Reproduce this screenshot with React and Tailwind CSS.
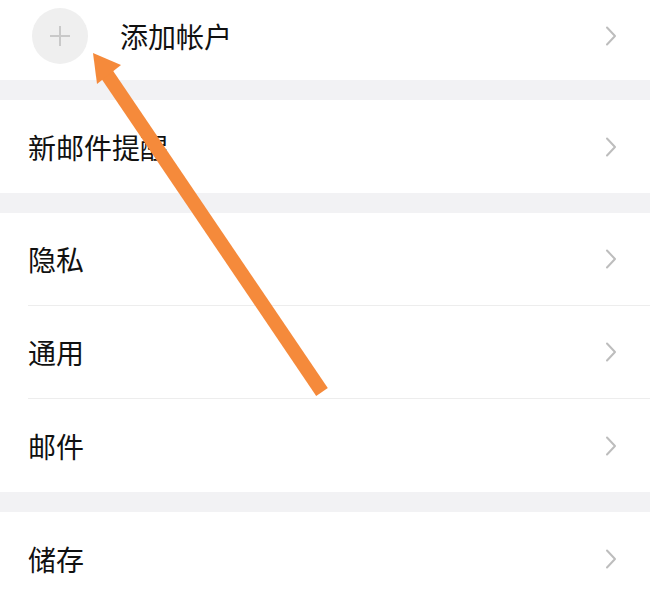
import React from "react";

const font = { fontFamily: '"Noto Sans CJK SC", "Noto Sans", sans-serif' };

function Chevron() {
  return (
    <svg width="14" height="22" viewBox="0 0 14 22" className="shrink-0">
      <path d="M3 2.5 L11 11 L3 19.5" fill="none" stroke="#bdbdbd" strokeWidth="2" strokeLinecap="round" strokeLinejoin="round" />
    </svg>
  );
}

function Row({ label, sep }) {
  return (
    <div className="pl-[28px]">
      <div className={`flex items-center justify-between h-[93px] pr-[32px] ${sep ? "border-b border-[#ededed]" : ""}`}>
        <span className="text-[28px] text-[#111] leading-none">{label}</span>
        <Chevron />
      </div>
    </div>
  );
}

export default function App() {
  return (
    <div className="relative w-[650px] h-[597px] overflow-hidden bg-white" style={font}>
      <div className="flex items-center h-[80px] pl-[32px] pr-[32px] pb-[8px]">
        <div className="w-[56px] h-[56px] rounded-full bg-[#efefef] flex items-center justify-center shrink-0">
          <svg width="22" height="22" viewBox="0 0 22 22">
            <path d="M11 1 V21 M1 11 H21" stroke="#c9c9c9" strokeWidth="2" />
          </svg>
        </div>
        <span className="ml-[32px] text-[28px] text-[#111] leading-none">添加帐户</span>
        <div className="ml-auto"><Chevron /></div>
      </div>
      <div className="h-[20px] bg-[#f2f2f4]" />
      <Row label="新邮件提醒" />
      <div className="h-[20px] bg-[#f2f2f4]" />
      <Row label="隐私" sep />
      <Row label="通用" sep />
      <Row label="邮件" />
      <div className="h-[20px] bg-[#f2f2f4]" />
      <Row label="储存" />
      <svg className="absolute left-0 top-0 pointer-events-none" width="650" height="597" viewBox="0 0 650 597">
        <line x1="322" y1="392" x2="104" y2="70" stroke="#f58a3b" strokeWidth="14" strokeLinecap="butt" />
        <polygon points="93,53 121,65 97,84" fill="#f58a3b" />
      </svg>
    </div>
  );
}
